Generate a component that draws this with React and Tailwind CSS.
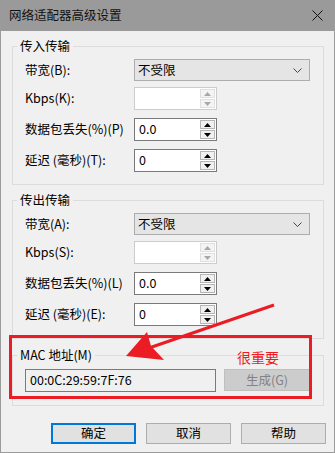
import React from 'react';

const FONT = { fontFamily: '"Noto Sans CJK SC", "Noto Sans", sans-serif' };

function Arrow({ up, disabled }) {
  const c = disabled ? '#a8a8a8' : '#000';
  return (
    <svg width="7" height="4" viewBox="0 0 7 4">
      {up ? <polygon points="0,4 7,4 3.5,0" fill={c} /> : <polygon points="0,0 7,0 3.5,4" fill={c} />}
    </svg>
  );
}

function Spin({ value, disabled }) {
  return (
    <div
      className={`flex w-[83px] h-[23px] bg-white border ${
        disabled ? 'border-[#cccccc]' : 'border-[#7a7a7a]'
      }`}
    >
      <div className="flex-1 flex items-center pl-[4px] text-[12.5px] text-black">{value}</div>
      <div className="flex flex-col w-[17px] p-[1px] gap-[1px] bg-white">
        <div
          className={`flex-1 flex items-center justify-center border ${
            disabled ? 'border-[#e0e0e0] bg-[#f4f4f4]' : 'border-[#b5b5b5] bg-[#f0f0f0]'
          }`}
        >
          <Arrow up disabled={disabled} />
        </div>
        <div
          className={`flex-1 flex items-center justify-center border ${
            disabled ? 'border-[#e0e0e0] bg-[#f4f4f4]' : 'border-[#b5b5b5] bg-[#f0f0f0]'
          }`}
        >
          <Arrow disabled={disabled} />
        </div>
      </div>
    </div>
  );
}

function Select() {
  return (
    <div className="flex items-center justify-between w-[176px] h-[22px] bg-[#e5e5e5] border border-[#adadad] pl-[3px] pr-[7px] text-[12.5px] text-black">
      <span>不受限</span>
      <svg width="9" height="5" viewBox="0 0 9 5">
        <polyline points="0.5,0.5 4.5,4.5 8.5,0.5" fill="none" stroke="#444" strokeWidth="1" />
      </svg>
    </div>
  );
}

function Group({ title, children, className }) {
  return (
    <div className={`relative ml-[11px] w-[312px] border border-[#dcdcdc] ${className}`}>
      <div className="absolute top-[-9px] left-[4px] px-[3px] bg-[#f0f0f0] text-[12.5px] leading-[16px] text-black">
        {title}
      </div>
      {children}
    </div>
  );
}

function Row({ label, children, className }) {
  return (
    <div className={`flex items-center ${className}`}>
      <div className="w-[109px] text-[12.5px] text-black whitespace-nowrap">{label}</div>
      {children}
    </div>
  );
}

function Transfer({ title, keys, className }) {
  return (
    <Group title={title} className={`h-[139px] pt-[12px] pl-[12px] ${className}`}>
      <Row label={`带宽(${keys[0]}):`} className="h-[22px]">
        <Select />
      </Row>
      <Row label={`Kbps(${keys[1]}):`} className="h-[23px] mt-[6px]">
        <Spin value="" disabled />
      </Row>
      <Row label={`数据包丢失(%)(${keys[2]})`} className="h-[23px] mt-[8px]">
        <Spin value="0.0" />
      </Row>
      <Row label={`延迟 (毫秒)(${keys[3]}):`} className="h-[23px] mt-[8px]">
        <Spin value="0" />
      </Row>
    </Group>
  );
}

export default function App() {
  return (
    <div
      className="relative w-[335px] h-[453px] bg-[#f0f0f0] border-x border-b border-[#9b9b9b] overflow-hidden"
      style={FONT}
    >
      {/* title bar */}
      <div className="flex items-center justify-between h-[31px] bg-[#9a9a9a] pl-[8px] pr-[11px]">
        <span className="text-[12.5px] text-[#111]">网络适配器高级设置</span>
        <svg width="11" height="11" viewBox="0 0 11 11">
          <path d="M0.5 0.5 L10.5 10.5 M10.5 0.5 L0.5 10.5" stroke="#111" strokeWidth="1" />
        </svg>
      </div>

      <Transfer title="传入传输" keys={['B', 'K', 'P', 'T']} className="mt-[15px]" />
      <Transfer title="传出传输" keys={['A', 'S', 'L', 'E']} className="mt-[15px]" />

      <Group title="MAC 地址(M)" className="mt-[16px] h-[51px] pt-[13px] pl-[12px]">
        <div className="flex">
          <div className="flex items-center w-[191px] h-[23px] border border-[#7a7a7a] bg-[#f0f0f0] pl-[4px] text-[12.5px] text-black">
            00:0C:29:59:7F:76
          </div>
          <div className="ml-[8px] flex items-center justify-center w-[86px] h-[22px] bg-[#cccccc] border border-[#bfbfbf] text-[12.5px] text-[#838383]">
            生成(G)
          </div>
        </div>
      </Group>

      {/* dialog buttons */}
      <div className="flex justify-end gap-[10px] mt-[17px] pr-[8px]">
        <button className="w-[85px] h-[21px] bg-[#e1e1e1] border-2 border-[#0078d7] text-[12.5px] text-black leading-none">
          确定
        </button>
        <button className="w-[85px] h-[21px] bg-[#e1e1e1] border border-[#adadad] text-[12.5px] text-black leading-none">
          取消
        </button>
        <button className="w-[85px] h-[21px] bg-[#e1e1e1] border border-[#adadad] text-[12.5px] text-black leading-none">
          帮助
        </button>
      </div>

      {/* annotation overlay */}
      <div className="absolute left-[8px] top-[335px] w-[303px] h-[64px] border-[3px] border-[#ec1c24]" />
      <div className="absolute left-[236px] top-[348px] text-[14px] leading-[18px] text-[#ec1c24]">很重要</div>
      <svg className="absolute left-0 top-0 pointer-events-none" width="335" height="453" viewBox="0 0 335 453">
        <line x1="273" y1="305" x2="148" y2="348" stroke="#ec1c24" strokeWidth="3" />
        <polygon points="125,356 146,332 150,346 163,360" fill="#ec1c24" />
      </svg>
    </div>
  );
}
